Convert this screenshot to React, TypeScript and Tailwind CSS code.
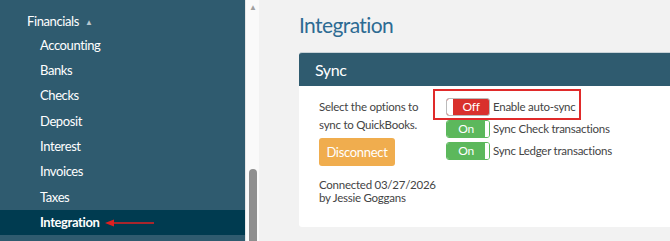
import React from "react";

const font = { fontFamily: 'Lato, "Open Sans", sans-serif' };

function Toggle({ on }: { on: boolean }) {
  if (on) {
    return (
      <div className="flex h-[18px] w-[44px] shrink-0 overflow-hidden rounded-[3px] border border-[#5cb85c] bg-white">
        <div className="flex flex-1 items-center justify-center bg-[#5cb85c] text-[12px] text-white">On</div>
        <div className="w-[4px] bg-white" />
      </div>
    );
  }
  return (
    <div className="flex h-[18px] w-[44px] shrink-0 overflow-hidden rounded-[3px] border border-[#bbb] bg-[#d9302c]">
      <div className="w-[6px] rounded-l-[2px] bg-white" />
      <div className="flex flex-1 items-center justify-center text-[12px] text-white">Off</div>
    </div>
  );
}

const subItems = ["Accounting", "Banks", "Checks", "Deposit", "Interest", "Invoices", "Taxes"];

export default function App() {
  return (
    <div className="flex h-[241px] w-[670px] overflow-hidden bg-[#f2f2f2]" style={font}>
      <div className="flex w-[245px] shrink-0 flex-col bg-[#2f5b6f] pt-[10px] text-[13px] tracking-[-0.4px] text-white">
        <div className="flex h-[23px] items-center pl-[27px]">
          Financials
          <span className="ml-[6px] text-[8px] text-[#b7c6ce]">▲</span>
        </div>
        {subItems.map((s) => (
          <div key={s} className="flex h-[25.3px] items-center pl-[40px]">
            {s}
          </div>
        ))}
        <div className="flex h-[25px] items-center bg-[#003b50] pl-[40px] font-bold">
          Integration
          <svg width="50" height="8" viewBox="0 0 50 8" className="ml-[6px]">
            <path d="M8 4 H49" stroke="#e02020" strokeWidth="1.6" />
            <path d="M0 4 L9 0.5 L9 7.5 Z" fill="#e02020" />
          </svg>
        </div>
      </div>
      <div className="relative w-[14px] shrink-0 border-l border-[#e6e6e6] bg-[#fafafa]">
        <div className="absolute left-[3px] top-[1px] text-[8px] text-[#a0a0a0]">▲</div>
        <div className="absolute left-[3px] top-[169px] h-[80px] w-[8px] rounded-full bg-[#8f8f8f]" />
      </div>
      <div className="flex-1 pl-[40px]">
        <div className="pt-[11px] text-[21px] leading-[28px] tracking-[-0.6px] text-[#2d6b93]">Integration</div>
        <div className="mt-[13px] w-[420px] rounded-[3px] bg-white">
          <div className="flex h-[34px] items-center rounded-t-[3px] border-t border-[#c9d3d8] bg-[#2f5b6f] pl-[16px] text-[16px] tracking-[-0.4px] text-white">
            Sync
          </div>
          <div className="flex h-[141px] pl-[20px] pt-[12px] text-[11.5px] leading-[18px] tracking-[-0.25px] text-[#444]">
            <div className="w-[127px] whitespace-nowrap">
              <div>Select the options to</div>
              <div>sync to QuickBooks.</div>
              <div className="mt-[4px] flex h-[28px] w-[76px] items-center justify-center rounded-[3px] bg-[#f0ad4e] text-[13px] tracking-[-0.3px] text-white">
                Disconnect
              </div>
              <div className="mt-[12px] leading-[13px]">Connected 03/27/2026</div>
              <div className="leading-[13px]">by Jessie Goggans</div>
            </div>
            <div className="relative flex flex-col gap-[4px] whitespace-nowrap">
              <div className="pointer-events-none absolute -left-[13px] -top-[9px] h-[31px] w-[148px] border-2 border-[#e02a2a]" />
              <div className="flex items-center gap-[3px]">
                <Toggle on={false} />
                <span>Enable auto-sync</span>
              </div>
              <div className="flex items-center gap-[3px]">
                <Toggle on />
                <span>Sync Check transactions</span>
              </div>
              <div className="flex items-center gap-[3px]">
                <Toggle on />
                <span>Sync Ledger transactions</span>
              </div>
            </div>
          </div>
        </div>
      </div>
    </div>
  );
}
